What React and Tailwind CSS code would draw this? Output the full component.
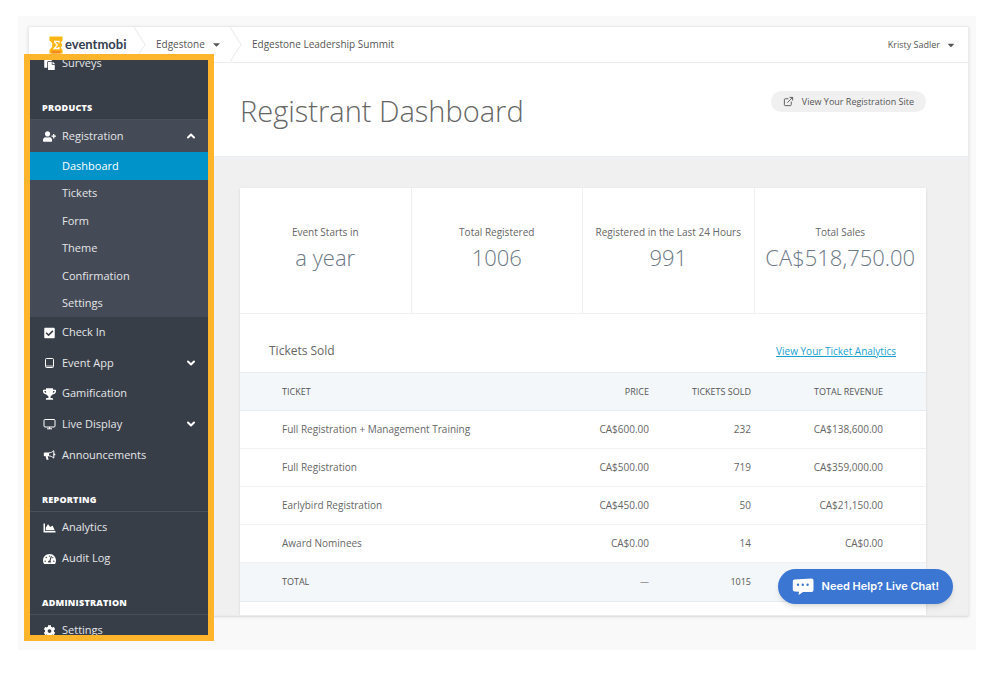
import React from "react";
import {
  FaPaste,
  FaUserPlus,
  FaCheckSquare,
  FaTrophy,
  FaChartArea,
  FaTachometerAlt,
  FaCog,
  FaCaretDown,
} from "react-icons/fa";
import { ExternalLink, ChevronUp, ChevronDown } from "lucide-react";

// ================= ICONS =================
const TabletIcon = ({ className }) => (
  <svg viewBox="0 0 12 12" className={className} fill="none" stroke="currentColor">
    <rect x="2" y="1.5" width="8" height="9" rx="1" strokeWidth="1" />
    <path d="M2 9h8" strokeWidth="0.8" />
  </svg>
);

const ScreenIcon = ({ className }) => (
  <svg viewBox="0 0 12 12" className={className} fill="none" stroke="currentColor">
    <rect x="0.5" y="1.5" width="11" height="7.5" rx="1" strokeWidth="1" />
    <path d="M3.5 10.8h5M6 9v1.8" strokeWidth="1" />
  </svg>
);

const HornIcon = ({ className }) => (
  <svg viewBox="0 0 12 12" className={className} fill="currentColor">
    <path d="M1.2 3.6h4.3v3.6H4.2l.9 3.6H3L2.2 7.2h-1a.9.9 0 0 1-.9-.9V4.5a.9.9 0 0 1 .9-.9z" />
    <path
      d="M5.5 3.9C7.3 3.8 9 2.9 10.3 1.7V9.1C9 7.9 7.3 7 5.5 6.9"
      fill="none"
      stroke="currentColor"
      strokeWidth="1"
    />
    <circle cx="11" cy="5.4" r="0.9" />
  </svg>
);

const LogoMark = () => (
  <svg viewBox="0 0 14 18" className="h-[18px] w-[14px]">
    <path
      d="M.5.5h13v4.2c-1.8.6-1.8 2.5-.6 3.2v2.4c-1.2.7-1.2 2.6.6 3.2v4H.5v-3.8L3.2 11V7L.5 4.5z"
      fill="#fdb515"
    />
    <path d="M2.500 14.700h9v2.800h-9z" fill="#f58a1f" />
    <path d="M5 5.4h5v1.8M5.2 5.5 8.200 9l-3 3.500H10v-1.800" fill="none" stroke="#fff" strokeWidth="1.3" />
  </svg>
);

const ChatIcon = () => (
  <svg viewBox="0 0 22 18" className="h-[18px] w-[22px]">
    <path
      d="M2.5 1.6 19.5.6A2 2 0 0 1 21.5 2.6V12a2 2 0 0 1-2 2H11l-4.5 3 .6-3.2-4.3-.4A2 2 0 0 1 .8 11.400V3.400A1.800 1.800 0 0 1 2.500 1.600z"
      fill="#fff"
    />
    <circle cx="6" cy="6.8" r="1.2" fill="#3b76d3" />
    <circle cx="10.8" cy="6.8" r="1.2" fill="#3b76d3" />
    <circle cx="15.6" cy="6.8" r="1.2" fill="#3b76d3" />
  </svg>
);

const CrumbArrow = () => (
  <svg viewBox="0 0 12 35" className="h-[35px] w-3 shrink-0" fill="none">
    <path d="M0 0 11 17.5 0 35" stroke="#e9e9e9" />
  </svg>
);

// ================= DATA =================
const registrationPages = [
  "Dashboard",
  "Tickets",
  "Form",
  "Theme",
  "Confirmation",
  "Settings",
];

const productLinks = [
  { label: "Check In", icon: FaCheckSquare },
  { label: "Event App", icon: TabletIcon, expandable: true },
  { label: "Gamification", icon: FaTrophy },
  { label: "Live Display", icon: ScreenIcon, expandable: true },
  { label: "Announcements", icon: HornIcon },
];

const stats = [
  { label: "Event Starts in", value: "a year" },
  { label: "Total Registered", value: "1006" },
  { label: "Registered in the Last 24 Hours", value: "991" },
  { label: "Total Sales", value: "CA$518,750.00" },
];

const tickets = [
  { name: "Full Registration + Management Training", price: "CA$600.00", sold: 232, revenue: "CA$138,600.00" },
  { name: "Full Registration", price: "CA$500.00", sold: 719, revenue: "CA$359,000.00" },
  { name: "Earlybird Registration", price: "CA$450.00", sold: 50, revenue: "CA$21,150.00" },
  { name: "Award Nominees", price: "CA$0.00", sold: 14, revenue: "CA$0.00" },
];

// ================= SIDEBAR =================
const NavHeading = ({ children }) => (
  <h2 className="flex h-[41px] items-end border-b border-[#4a505b] pb-[5px] pl-3 text-[9px] leading-[12px] font-extrabold tracking-wide text-white">
    {children}
  </h2>
);

const NavLink = ({ label, icon: Icon, expandable }) => (
  <a href="#" className="flex h-[31px] items-center gap-1.5 pr-[11px] pl-[13px] text-[#e4e6e8]">
    <Icon className="h-3 w-[13px] shrink-0 text-white" />
    <span className="flex-1">{label}</span>
    {expandable && <ChevronDown className="size-3 text-white" strokeWidth={4} />}
  </a>
);

const Sidebar = () => (
  <aside className="z-10 -mt-[9px] -mb-[26px] -ml-[5px] w-[190px] shrink-0 overflow-hidden border-6 border-[#ffb52b] bg-[#383e48] text-[11px]">
    <nav className="-mt-3">
      <NavLink label="Surveys" icon={FaPaste} />
      <NavHeading>PRODUCTS</NavHeading>
      <div className="bg-[#444a56]">
        <button className="flex h-8 w-full items-center gap-1.5 pr-[11px] pl-[13px] text-left text-[#e4e6e8]">
          <FaUserPlus className="size-[13px] shrink-0 text-white" />
          <span className="flex-1">Registration</span>
          <ChevronUp className="size-3 text-white" strokeWidth={4} />
        </button>
        <ul className="grid h-[165px] grid-rows-6">
          {registrationPages.map((page) => (
            <li key={page} className="grid">
              <a
                href="#"
                className={`flex items-center pl-8 ${
                  page === "Dashboard" ? "bg-[#0093c9] text-white" : "text-[#e4e6e8]"
                }`}
              >
                {page}
              </a>
            </li>
          ))}
        </ul>
      </div>
      <div className="mb-px grid h-[153px] grid-rows-5">
        {productLinks.map((link) => (
          <NavLink key={link.label} {...link} />
        ))}
      </div>
      <NavHeading>REPORTING</NavHeading>
      <NavLink label="Analytics" icon={FaChartArea} />
      <NavLink label="Audit Log" icon={FaTachometerAlt} />
      <NavHeading>ADMINISTRATION</NavHeading>
      <NavLink label="Settings" icon={FaCog} />
    </nav>
  </aside>
);

// ================= TOP BAR =================
const TopBar = () => (
  <header className="flex h-9 shrink-0 items-center border-b border-[#ececec] bg-white text-[10px] text-[#555]">
    <a href="#" className="flex w-[105px] items-center gap-0.5 pl-5">
      <LogoMark />
      <span className="font-[family-name:Lato,sans-serif] text-[13px] leading-none font-bold text-[#34404f]">
        eventmobi
      </span>
    </a>
    <CrumbArrow />
    <button className="flex w-[84px] items-center gap-1.5 pl-2.5">
      Edgestone <FaCaretDown className="size-[11px]" />
    </button>
    <CrumbArrow />
    <span className="flex-1 pl-2.5">Edgestone Leadership Summit</span>
    <button className="flex items-center gap-1.5 pr-3 text-[9px]">
      Kristy Sadler <FaCaretDown className="size-[10px]" />
    </button>
  </header>
);

// ================= TICKET TABLE =================
const TicketTable = () => (
  <table className="w-full text-right text-[10px] text-[#666]">
    <thead>
      <tr className="h-[38px] border-y border-[#e3ecf3] bg-[#f3f7fa] text-[9px] text-[#555]">
        <th className="pl-[42px] text-left font-medium">TICKET</th>
        <th className="w-[110px] font-medium">PRICE</th>
        <th className="w-[102px] font-medium">TICKETS SOLD</th>
        <th className="w-[175px] pr-[43px] font-medium">TOTAL REVENUE</th>
      </tr>
    </thead>
    <tbody>
      {tickets.map((ticket) => (
        <tr key={ticket.name} className="h-[38px] border-b border-[#f1f1f1]">
          <td className="pl-[42px] text-left">{ticket.name}</td>
          <td>{ticket.price}</td>
          <td>{ticket.sold}</td>
          <td className="pr-[43px]">{ticket.revenue}</td>
        </tr>
      ))}
    </tbody>
    <tfoot>
      <tr className="h-[39px] border-b border-[#e3ecf3] bg-[#f3f7fa] text-[9px] font-medium text-[#555]">
        <td className="pl-[42px] text-left">TOTAL</td>
        <td>—</td>
        <td>1015</td>
        <td className="pr-[43px]"></td>
      </tr>
    </tfoot>
  </table>
);

const App = () => {
  return (
    <div className="flex h-screen bg-white pt-4 pr-6 pb-[25px] pl-[18px] font-['Open_Sans','Noto_Sans',sans-serif]">
      <div className="flex flex-1 bg-[#f9f9f9] pt-2.5 pr-[7px] pb-[34px] pl-2.5">
        <div className="relative flex flex-1 flex-col border border-[#ebebeb] bg-[#f0f0f0] shadow-sm">
          <TopBar />

          <div className="flex min-h-0 flex-1">
            <Sidebar />

            <main className="min-w-0 flex-1 overflow-hidden">
              <div className="flex h-[94px] items-start justify-between border-b border-[#e8eef2] bg-white pr-[42px] pl-[26px]">
                <h1 className="pt-7 text-[29px] leading-10 font-light text-[#666]">
                  Registrant Dashboard
                </h1>
                <a
                  href="#"
                  className="mt-7 flex h-[21px] items-center gap-2 rounded-full bg-[#f0f0f0] px-3 text-[9px] text-[#555]"
                >
                  <ExternalLink className="size-[11px]" />
                  View Your Registration Site
                </a>
              </div>

              <div className="pt-[31px] pr-[42px] pl-[26px]">
                <section className="bg-white pb-8 shadow">
                  <div className="grid grid-cols-4 divide-x divide-[#f0f0f0] border-b border-[#f0f0f0]">
                    {stats.map((stat) => (
                      <div key={stat.label} className="h-[125px] pt-9 text-center whitespace-nowrap">
                        <p className="text-[10px] leading-4 text-[#666]">{stat.label}</p>
                        <p className="text-[22px] leading-[34px] font-light text-[#6b7885]">{stat.value}</p>
                      </div>
                    ))}
                  </div>

                  <div className="flex h-[58px] items-center justify-between pt-4 pr-[30px] pl-[29px]">
                    <h2 className="text-xs text-[#666]">Tickets Sold</h2>
                    <a href="#" className="text-[10px] text-[#1b9fd0] underline">
                      View Your Ticket Analytics
                    </a>
                  </div>

                  <TicketTable />
                </section>
              </div>
            </main>
          </div>

          {/* LIVE CHAT */}
          <button className="absolute right-[15px] bottom-[11px] z-20 flex h-[35px] items-center gap-2 rounded-full bg-[#3b76d3] px-3.5 font-[family-name:Inter,sans-serif] text-[11px] font-semibold text-white shadow-md">
            <ChatIcon />
            Need Help? Live Chat!
          </button>
        </div>
      </div>
    </div>
  );
};

export default App;
